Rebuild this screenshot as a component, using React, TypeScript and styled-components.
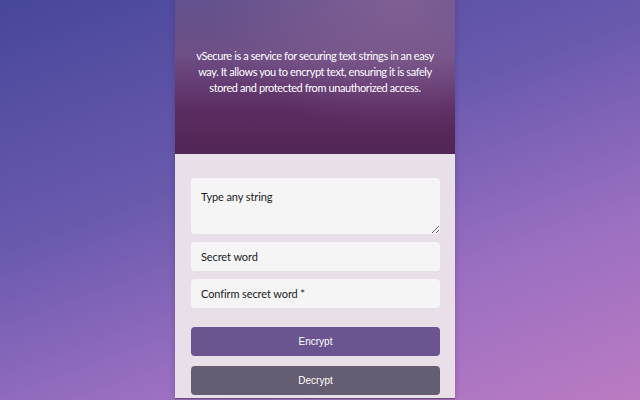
import React from "react";
import styled, { createGlobalStyle } from "styled-components";

const GlobalStyle = createGlobalStyle`
  html, body {
    margin: 0;
    padding: 0;
  }
  body {
    font-family: Lato, "Noto Sans", sans-serif;
  }
`;

export default function App() {
  return (
    <>
      <GlobalStyle />
      <Root>
        <Card>
          <Header>
            <Intro>
              vSecure is a service for securing text strings in an easy way. It
              allows you to encrypt text, ensuring it is safely stored and
              protected from unauthorized access.
            </Intro>
          </Header>
          <Body>
            <TextArea placeholder="Type any string" />
            <Input type="password" placeholder="Secret word" />
            <Input type="password" placeholder="Confirm secret word *" />
            <Actions>
              <Button $tone="#6a5591">Encrypt</Button>
              <Button $tone="#655d71">Decrypt</Button>
            </Actions>
          </Body>
        </Card>
      </Root>
    </>
  );
}

const Root = styled.div`
  display: flex;
  justify-content: center;
  height: 100vh;
  padding-right: 10px;
  box-sizing: border-box;
  background: linear-gradient(160deg, #47479a 0%, #6a5aae 40%, #9a6fc2 70%, #bb7bc2 100%);
  overflow: hidden;
`;
const Card = styled.div`
  width: 280px;
  height: 398px;
  display: flex;
  flex-direction: column;
  background: #e8dfe8;
  border-bottom: 1px solid #6c4f7c;
  box-shadow: 0 0 6px rgba(40, 20, 60, 0.25);
`;
const Header = styled.div`
  height: 154px;
  box-sizing: border-box;
  padding: 0 16px 10px;
  display: flex;
  align-items: center;
  justify-content: center;
  background:
    radial-gradient(ellipse at 80% 0%, rgba(140, 100, 150, 0.7) 0%, rgba(140, 100, 150, 0) 60%),
    linear-gradient(180deg, #62528e 0%, #6e4f86 35%, #5c2d63 70%, #512553 100%);
`;
const Intro = styled.p`
  margin: 0;
  color: #ffffff;
  font-size: 11px;
  letter-spacing: -0.4px;
  line-height: 16px;
  text-align: center;
`;
const Body = styled.div`
  flex: 1;
  display: flex;
  flex-direction: column;
  gap: 8px;
  padding: 24px 15px 0 16px;
`;
const fieldStyle = `
  box-sizing: border-box;
  width: 100%;
  border: none;
  border-radius: 4px;
  background: #f6f5f6;
  font-family: Lato, "Noto Sans", sans-serif;
  font-size: 11px;
  letter-spacing: -0.1px;
  color: #222;
  padding: 0 10px;
  outline: none;
  &::placeholder {
    color: #222;
    opacity: 1;
  }
`;
const TextArea = styled.textarea`
  ${fieldStyle}
  height: 56px;
  padding-top: 12px;
  resize: vertical;
`;
const Input = styled.input`
  ${fieldStyle}
  height: 29px;
`;
const Actions = styled.div`
  display: flex;
  flex-direction: column;
  gap: 10px;
  margin-top: 11px;
`;
const Button = styled.button<{ $tone: string }>`
  height: 29px;
  border: none;
  border-radius: 4px;
  background: ${(p) => p.$tone};
  color: #fff;
  font-family: "Liberation Sans", Arial, sans-serif;
  font-size: 10px;
`;
